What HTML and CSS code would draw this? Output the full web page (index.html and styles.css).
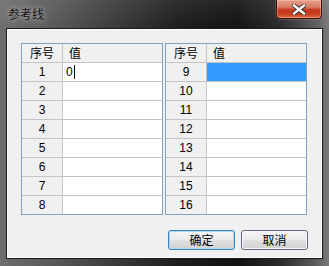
FILE: index.html
```html
<!DOCTYPE html>
<html lang="zh">
<head>
<meta charset="utf-8">
<title>参考线</title>
<link rel="stylesheet" href="styles.css">
</head>
<body>
<div class="window">
  <div class="titlebar">
    <span class="title">参考线</span>
    <div class="close">
      <svg width="14" height="11" viewBox="0 0 14 11">
        <path d="M2 1.5 L12 9.5 M12 1.5 L2 9.5" stroke="#2a2a2a" stroke-width="4.2" stroke-linecap="square" fill="none"/>
        <path d="M2 1.5 L12 9.5 M12 1.5 L2 9.5" stroke="#ffffff" stroke-width="2.4" stroke-linecap="square" fill="none"/>
      </svg>
    </div>
  </div>
  <div class="client">
    <div class="tables">
      <div class="grid">
        <div class="hd num">序号</div><div class="hd val">值</div>
        <div class="num">1</div><div class="val"><span class="text">0</span><span class="caret"></span></div>
        <div class="num">2</div><div class="val"></div>
        <div class="num">3</div><div class="val"></div>
        <div class="num">4</div><div class="val"></div>
        <div class="num">5</div><div class="val"></div>
        <div class="num">6</div><div class="val"></div>
        <div class="num">7</div><div class="val"></div>
        <div class="num">8</div><div class="val"></div>
      </div>
      <div class="grid">
        <div class="hd num">序号</div><div class="hd val">值</div>
        <div class="num">9</div><div class="val selected"></div>
        <div class="num">10</div><div class="val"></div>
        <div class="num">11</div><div class="val"></div>
        <div class="num">12</div><div class="val"></div>
        <div class="num">13</div><div class="val"></div>
        <div class="num">14</div><div class="val"></div>
        <div class="num">15</div><div class="val"></div>
        <div class="num">16</div><div class="val"></div>
      </div>
    </div>
    <div class="buttons">
      <button class="btn default">确定</button>
      <button class="btn">取消</button>
    </div>
  </div>
</div>
</body>
</html>
```

FILE: styles.css
```css
html, body {
  margin: 0;
  padding: 0;
}
body {
  font-family: "Liberation Sans", "Noto Sans CJK SC", sans-serif;
  font-size: 12px;
  color: #000;
}
.window {
  width: 329px;
  height: 266px;
  box-sizing: border-box;
  display: flex;
  flex-direction: column;
  padding: 0 6px 7px 6px;
  background:
    linear-gradient(to bottom, rgba(255,255,255,0.08), rgba(0,0,0,0) 30px),
    linear-gradient(to right, #6e6e6e 0%, #5a5a5a 15%, #3a3a3a 35%, #1c1c1c 55%, #121212 72%, #2a2a2a 85%, #5c5c5c 96%, #7a7a7a 100%);
}
.titlebar {
  height: 28px;
  flex: none;
  display: flex;
  justify-content: space-between;
  align-items: flex-start;
  margin: 0 -6px;
}
.title {
  margin: 6px 0 0 8px;
  line-height: 16px;
  font-family: "Noto Sans CJK SC", sans-serif;
  font-size: 12px;
  color: #111;
  text-shadow: 0 0 4px rgba(255,255,255,0.55), 0 0 8px rgba(255,255,255,0.35);
}
.close {
  width: 44px;
  height: 18px;
  margin-right: 7px;
  border: 1px solid #3a0d07;
  border-top: none;
  border-radius: 0 0 4px 4px;
  display: flex;
  align-items: center;
  justify-content: center;
  background: linear-gradient(to bottom, #e8a28e 0%, #d77a62 40%, #c2361c 55%, #c9421f 80%, #e07040 100%);
  box-shadow: inset 0 0 0 1px rgba(255,200,180,0.45), 0 0 0 1px rgba(255,255,255,0.15);
}
.client {
  flex: 1;
  border: 1px solid #1a1a1a;
  background: #f0f0f0;
  box-shadow: inset 0 0 0 1px #ffffff;
  padding: 14px 14px 0 14px;
  display: flex;
  flex-direction: column;
}
.tables {
  display: flex;
  gap: 2px;
}
.grid {
  display: grid;
  grid-template-columns: 40px 99px;
  grid-auto-rows: 18px;
  gap: 1px;
  background: #c4c4c4;
  border: 1px solid #82a0bf;
}
.grid > div {
  line-height: 18px;
  white-space: nowrap;
  overflow: hidden;
}
.num {
  background: #f0f0f0;
  text-align: center;
}
.val {
  background: #ffffff;
  padding-left: 3px;
  display: flex;
  align-items: center;
}
.hd {
  background: #f0f0f0;
  font-family: "Noto Sans CJK SC", sans-serif;
}
.hd.val {
  background: #f0f0f0;
  padding-left: 6px;
}
.selected {
  background: #3399ff;
}
.caret {
  display: inline-block;
  width: 1px;
  height: 14px;
  background: #000;
  margin-left: 1px;
}
.buttons {
  display: flex;
  justify-content: flex-end;
  gap: 6px;
  margin-top: 15px;
}
.btn {
  width: 67px;
  height: 20px;
  box-sizing: border-box;
  margin: 0;
  padding: 0;
  border: 1px solid #5a6676;
  border-radius: 3px;
  font-family: "Noto Sans CJK SC", sans-serif;
  font-size: 12px;
  line-height: 16px;
  color: #000;
  background: linear-gradient(to bottom, #f4f4f4 0%, #ececec 45%, #dedede 55%, #d2d2d2 100%);
  box-shadow: inset 0 0 0 1px #fbfbfb;
}
.btn.default {
  border-color: #3c7fb1;
  box-shadow: inset 0 0 0 1px #a6dcf6;
}
```
